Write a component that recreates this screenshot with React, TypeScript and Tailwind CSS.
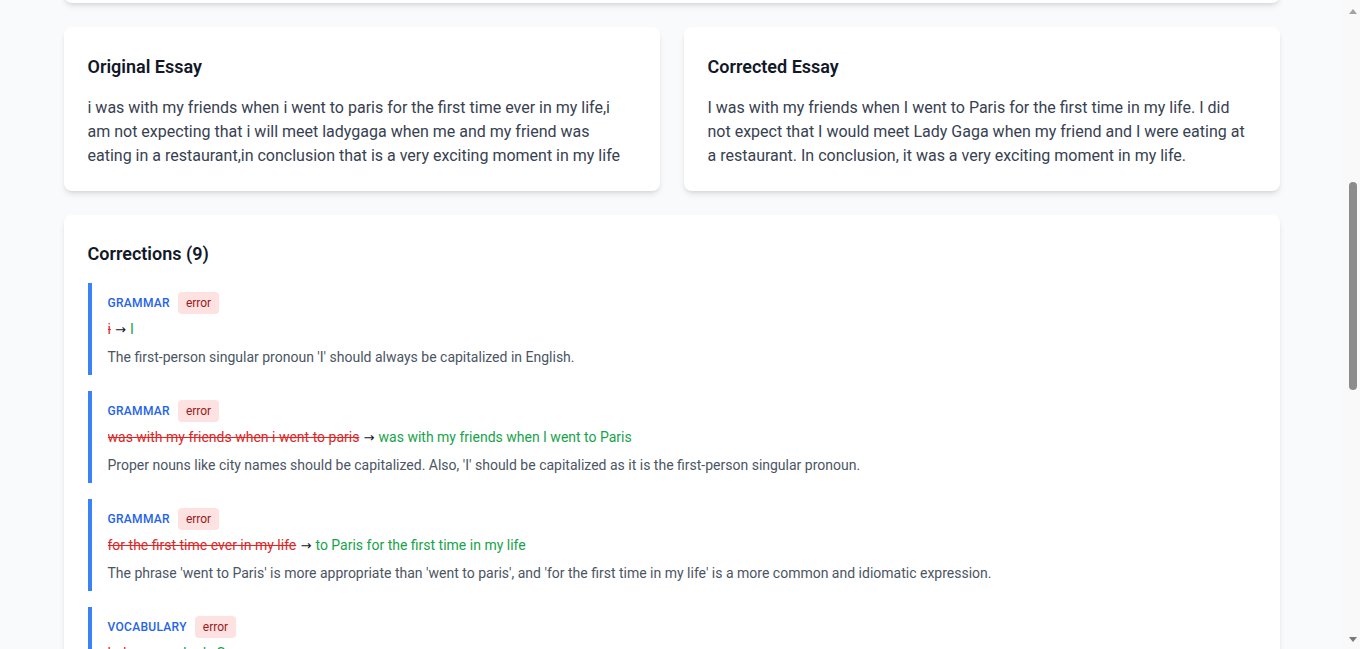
import { useLayoutEffect, useRef } from "react";

type Correction = {
  type: string;
  severity: string;
  original: string;
  corrected: string;
  explanation: string;
};

const originalEssay =
  "i was with my friends when i went to paris for the first time ever in my life,i am not expecting that i will meet ladygaga when me and my friend was eating in a restaurant,in conclusion that is a very exciting moment in my life";

const correctedEssay =
  "I was with my friends when I went to Paris for the first time in my life. I did not expect that I would meet Lady Gaga when my friend and I were eating at a restaurant. In conclusion, it was a very exciting moment in my life.";

const corrections: Correction[] = [
  {
    type: "grammar",
    severity: "error",
    original: "i",
    corrected: "I",
    explanation: "The first-person singular pronoun 'I' should always be capitalized in English.",
  },
  {
    type: "grammar",
    severity: "error",
    original: "was with my friends when i went to paris",
    corrected: "was with my friends when I went to Paris",
    explanation:
      "Proper nouns like city names should be capitalized. Also, 'I' should be capitalized as it is the first-person singular pronoun.",
  },
  {
    type: "grammar",
    severity: "error",
    original: "for the first time ever in my life",
    corrected: "to Paris for the first time in my life",
    explanation:
      "The phrase 'went to Paris' is more appropriate than 'went to paris', and 'for the first time in my life' is a more common and idiomatic expression.",
  },
  {
    type: "vocabulary",
    severity: "error",
    original: "ladygaga",
    corrected: "Lady Gaga",
    explanation: "Names of people are proper nouns and should be written with correct spacing and capitalization.",
  },
  {
    type: "grammar",
    severity: "error",
    original: "i am not expecting that i will meet",
    corrected: "I did not expect that I would meet",
    explanation: "The story happened in the past, so the past simple tense should be used consistently.",
  },
  {
    type: "grammar",
    severity: "error",
    original: "when me and my friend was eating",
    corrected: "when my friend and I were eating",
    explanation: "Use the subject pronoun 'I' and the plural verb 'were' with a compound subject.",
  },
  {
    type: "punctuation",
    severity: "error",
    original: "life,i",
    corrected: "life. I",
    explanation: "These are two separate sentences and should be divided by a full stop, not a comma.",
  },
  {
    type: "vocabulary",
    severity: "warning",
    original: "in a restaurant",
    corrected: "at a restaurant",
    explanation: "'At a restaurant' is the more natural preposition when talking about eating somewhere.",
  },
  {
    type: "punctuation",
    severity: "error",
    original: "in conclusion that is a very exciting moment",
    corrected: "In conclusion, it was a very exciting moment",
    explanation: "Start a new sentence, add a comma after 'In conclusion', and keep the past tense.",
  },
];

function Card({ title, children }: { title: string; children: React.ReactNode }) {
  return (
    <div className="rounded-lg bg-white px-6 pt-[26px] pb-[23px] shadow-md">
      <h2 className="mb-[15px] text-lg font-semibold text-[#111827]">{title}</h2>
      {children}
    </div>
  );
}

function CorrectionItem({ c }: { c: Correction }) {
  return (
    <div className="border-l-4 border-[#3b82f6] pl-4 pt-2 pb-2">
      <div className="flex h-[22px] items-center gap-2 pt-[2px]">
        <span className="text-xs font-medium uppercase tracking-wide text-[#2563eb]">{c.type}</span>
        <span className="rounded bg-[#fee2e2] px-2 py-[3px] text-xs text-[#991b1b]">{c.severity}</span>
      </div>
      <div className="mt-1.5 h-5 overflow-hidden text-sm leading-5">
        <span className="text-[#dc2626] line-through">{c.original}</span>
        <span className="font-['DejaVu_Sans'] text-[13px] leading-none text-[#111827]"> → </span>
        <span className="text-[#16a34a]">{c.corrected}</span>
      </div>
      <p className="mt-2 text-sm leading-5 text-[#4b5563]">{c.explanation}</p>
    </div>
  );
}

// Classic browser scrollbar: arrows at both ends and the thumb part-way down.
function ScrollBar() {
  return (
    <div className="w-[17px] shrink-0 bg-[#f9f9f9]">
      <svg width="17" height="649" viewBox="0 0 17 649">
        <path d="M10 9 L14 14 L6 14 Z" fill="#a3a3a3" />
        <rect x="6" y="182" width="8" height="208" rx="4" fill="#8c8c8c" />
        <path d="M6 637 L14 637 L10 642 Z" fill="#7a7a7a" />
      </svg>
    </div>
  );
}

export default function App() {
  const scrollRef = useRef<HTMLDivElement>(null);
  const essaysRef = useRef<HTMLDivElement>(null);

  useLayoutEffect(() => {
    const box = scrollRef.current;
    const el = essaysRef.current;
    if (box && el) {
      box.scrollTop = el.offsetTop - 27;
    }
  }, []);

  return (
    <div className="flex h-screen bg-[#f9fafb] font-[Roboto,sans-serif] text-[#111827]">
      <div ref={scrollRef} className="relative flex-1 overflow-y-auto [scrollbar-width:none]">
        <div className="mx-auto max-w-7xl px-8 py-8">
          <div className="mb-8">
            <h1 className="text-3xl font-bold text-[#111827]">Essay Correction Result</h1>
            <p className="mt-1 text-[#6b7280]">Review the feedback and corrections for your essay below.</p>
          </div>

          <div className="mb-6 rounded-lg bg-white p-6 shadow-md">
            <h2 className="mb-4 text-lg font-semibold text-[#111827]">Overall Score</h2>
            <div className="grid grid-cols-4 gap-4">
              {[
                ["Overall", "62"],
                ["Grammar", "55"],
                ["Vocabulary", "68"],
                ["Structure", "64"],
              ].map(([label, value]) => (
                <div key={label} className="rounded-lg bg-[#f9fafb] p-4">
                  <div className="text-sm text-[#6b7280]">{label}</div>
                  <div className="mt-1 text-3xl font-bold text-[#2563eb]">{value}</div>
                </div>
              ))}
            </div>
            <h3 className="mt-6 mb-2 font-semibold text-[#111827]">Summary</h3>
            <p className="leading-6 text-[#374151]">
              The essay tells a short personal story clearly, but it contains several capitalization, tense and
              punctuation mistakes. Focus on capitalizing proper nouns and the pronoun 'I', using the past tense
              consistently, and separating sentences with full stops.
            </p>
            <div className="mt-6 grid grid-cols-2 gap-6">
              <div>
                <h3 className="mb-2 font-semibold text-[#15803d]">Strengths</h3>
                <ul className="list-disc space-y-1 pl-5 text-sm text-[#374151]">
                  <li>Clear and engaging personal experience</li>
                  <li>Simple, easy-to-follow sequence of events</li>
                  <li>Good basic vocabulary</li>
                </ul>
              </div>
              <div>
                <h3 className="mb-2 font-semibold text-[#b45309]">Areas to Improve</h3>
                <ul className="list-disc space-y-1 pl-5 text-sm text-[#374151]">
                  <li>Capitalization of names and the pronoun 'I'</li>
                  <li>Consistent use of the past tense</li>
                  <li>Sentence boundaries and punctuation</li>
                </ul>
              </div>
            </div>
          </div>

          <div ref={essaysRef} className="mb-6 grid grid-cols-2 gap-6">
            <Card title="Original Essay">
              <p className="text-base leading-6 text-[#374151]">{originalEssay}</p>
            </Card>
            <Card title="Corrected Essay">
              <p className="text-base leading-6 text-[#374151]">{correctedEssay}</p>
            </Card>
          </div>

          <div className="mb-6 rounded-lg bg-white px-6 pt-6 pb-6 shadow-md">
            <h2 className="mb-[15px] pt-px text-lg font-semibold text-[#111827]">
              Corrections ({corrections.length})
            </h2>
            <div className="space-y-4">
              {corrections.map((c, i) => (
                <CorrectionItem key={i} c={c} />
              ))}
            </div>
          </div>

          <div className="flex justify-center gap-4 pt-2">
            <button className="rounded-lg bg-[#2563eb] px-6 py-3 text-sm font-semibold text-white shadow-sm">
              Submit Another Essay
            </button>
            <button className="rounded-lg border border-[#d1d5db] bg-white px-6 py-3 text-sm font-semibold text-[#374151]">
              Back to Dashboard
            </button>
          </div>
        </div>
      </div>
      <ScrollBar />
    </div>
  );
}
